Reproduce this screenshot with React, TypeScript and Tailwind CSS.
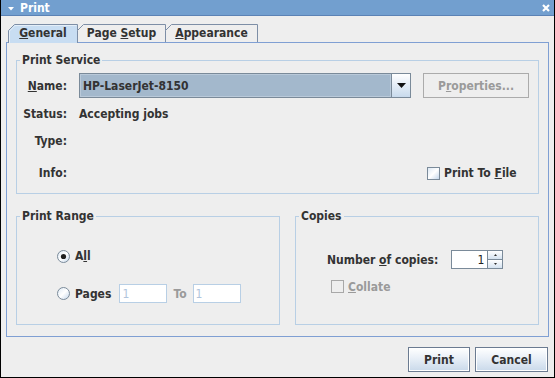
import React from "react";

function Tab({
  w,
  selected,
  className,
  children,
}: {
  w: number;
  selected?: boolean;
  className: string;
  children: React.ReactNode;
}) {
  const h = selected ? 19 : 18;
  return (
    <div className={`relative flex items-center justify-center ${className}`}>
      <svg
        className="absolute left-0 top-0"
        width={w}
        height={h}
        viewBox={`0 0 ${w} ${h}`}
      >
        <path
          d={`M0.5,${h} L0.5,6.5 L6.5,0.5 L${w - 0.5},0.5 L${w - 0.5},${h}`}
          fill={selected ? "#c8ddf2" : "#eeeeee"}
          stroke="#7d8ea6"
        />
        {selected && (
          <path
            d={`M1.5,${h} L1.5,7 L7,1.5 L${w - 1.5},1.5`}
            fill="none"
            stroke="#e4eef8"
          />
        )}
      </svg>
      <span className={`relative ${selected ? "pb-px" : ""}`}>{children}</span>
    </div>
  );
}

function Radio({ checked, id }: { checked?: boolean; id: string }) {
  return (
    <svg width="13" height="13" viewBox="0 0 13 13" className="shrink-0">
      <defs>
        <linearGradient id={id} x1="0" y1="0" x2="1" y2="1">
          <stop offset="0" stopColor="#dce8f4" />
          <stop offset="0.5" stopColor="#ffffff" />
          <stop offset="1" stopColor="#c0d4ea" />
        </linearGradient>
      </defs>
      <circle cx="6.5" cy="6.5" r="6" fill={`url(#${id})`} stroke="#7a8a99" />
      {checked && <circle cx="6.5" cy="6.5" r="2.6" fill="#1e1e1e" />}
    </svg>
  );
}

function Checkbox({ disabled }: { disabled?: boolean }) {
  return (
    <div
      className={
        disabled
          ? "w-[13px] h-[13px] border border-[#a8a8a8] bg-[#eeeeee] shrink-0"
          : "w-[13px] h-[13px] border border-[#7a8a99] bg-[linear-gradient(135deg,#dce8f4,#ffffff_50%,#c4d7ec)] shrink-0"
      }
    />
  );
}

function Button({ children }: { children: React.ReactNode }) {
  return (
    <div className="h-[25px] flex items-center justify-center border border-[#6b7b91] shadow-[inset_0_0_0_1px_#ffffff] bg-[linear-gradient(to_bottom,#ffffff,#e8eff7_45%,#c9d9ea)]">
      {children}
    </div>
  );
}

export default function App() {
  return (
    <div className="w-[555px] h-[378px] bg-[#eeeeee] border-x border-b border-black flex flex-col font-['DejaVu_Sans_Condensed','DejaVu_Sans',sans-serif] text-[12px] leading-[14px] font-bold text-[#333333] select-none overflow-hidden">
      {/* Title bar */}
      <div className="h-[16px] shrink-0 bg-[#729fcf] border-b border-[#5b82b5] flex items-center text-white">
        <svg width="6" height="4" viewBox="0 0 6 4" className="ml-[7px] mt-[2px]">
          <polygon points="0,0 6,0 3,3.5" fill="#ffffff" />
        </svg>
        <span className="ml-[6px]">Print</span>
        <div className="flex-1" />
        <svg width="8" height="8" viewBox="0 0 8 8" className="mr-[4px]">
          <path d="M1,1 L7,7 M7,1 L1,7" stroke="#ffffff" strokeWidth="2.2" />
        </svg>
      </div>

      {/* Body */}
      <div className="flex-1 flex flex-col px-[5px]">
        {/* Tabs */}
        <div className="mt-[8px] h-[18px] flex items-start pl-[2px] relative z-10">
          <Tab w={70} selected className="w-[70px] h-[19px]">
            <u>G</u>eneral
          </Tab>
          <Tab w={89} className="w-[89px] h-[18px] -ml-px">
            Page <u>S</u>etup
          </Tab>
          <Tab w={93} className="w-[93px] h-[18px] -ml-px">
            <u>A</u>ppearance
          </Tab>
        </div>

        {/* Tab panel */}
        <div className="h-[295px] border border-[#7f9fd3] flex flex-col px-[9px] pt-[10px]">
          {/* Print Service */}
          <fieldset className="h-[141px] border border-[#b8cfe5] px-0 m-0 min-w-0">
            <legend className="ml-[3px] px-[2px]">Print Service</legend>
            <div className="flex items-center h-[25px] mt-[6px]">
              <div className="w-[50px] text-right">
                <u>N</u>ame:
              </div>
              <div className="ml-[12px] w-[332px] h-[25px] flex border border-[#7a8a99]">
                <div className="flex-1 bg-[#a3b8cc] border border-[#b9c9d9] flex items-center pl-[2px]">
                  HP-LaserJet-8150
                </div>
                <div className="w-[19px] border-l border-[#7a8a99] bg-[linear-gradient(to_bottom,#ffffff,#e6eef7_45%,#c8daec)] flex items-center justify-center">
                  <svg width="9" height="5" viewBox="0 0 9 5">
                    <polygon points="0,0 9,0 4.5,5" fill="#111111" />
                  </svg>
                </div>
              </div>
              <div className="ml-[12px] w-[106px] h-[25px] border border-[#ababab] flex items-center justify-center text-[#9a9a9a]">
                P<u>r</u>operties...
              </div>
            </div>
            <div className="flex items-center h-[18px] mt-[7px]">
              <div className="w-[50px] text-right">Status:</div>
              <div className="ml-[12px]">Accepting jobs</div>
            </div>
            <div className="flex items-center h-[18px] mt-[9px]">
              <div className="w-[50px] text-right">Type:</div>
            </div>
            <div className="flex items-center h-[18px] mt-[14px]">
              <div className="w-[50px] text-right">Info:</div>
              <div className="ml-[12px] w-[332px]" />
              <div className="ml-[12px] pl-[4px] flex items-center">
                <Checkbox />
                <span className="ml-[4px]">
                  Print To <u>F</u>ile
                </span>
              </div>
            </div>
          </fieldset>

          {/* Lower row */}
          <div className="mt-[15px] flex gap-[15px]">
            <fieldset className="w-[264px] h-[116px] border border-[#b8cfe5] px-0 m-0 min-w-0">
              <legend className="ml-[3px] px-[2px]">Print Range</legend>
              <div className="pl-[40px] flex flex-col">
                <div className="mt-[24px] h-[18px] flex items-center">
                  <Radio checked id="rad-all" />
                  <span className="ml-[5px]">
                    A<u>l</u>l
                  </span>
                </div>
                <div className="mt-[19px] h-[19px] flex items-center">
                  <Radio id="rad-pages" />
                  <span className="ml-[5px]">
                    Pa<u>g</u>es
                  </span>
                  <div className="ml-[8px] w-[48px] h-[19px] border border-[#b8cfe5] bg-white flex items-center pl-[2px] font-normal text-[#b0c4dc]">
                    1
                  </div>
                  <span className="ml-[6px] text-[#9a9a9a]">To</span>
                  <div className="ml-[6px] w-[48px] h-[19px] border border-[#b8cfe5] bg-white flex items-center pl-[2px] font-normal text-[#b0c4dc]">
                    1
                  </div>
                </div>
              </div>
            </fieldset>

            <fieldset className="flex-1 h-[116px] border border-[#b8cfe5] px-0 m-0 min-w-0">
              <legend className="ml-[3px] px-[2px]">Copies</legend>
              <div className="pl-[31px] flex flex-col">
                <div className="mt-[27px] h-[19px] flex items-center">
                  <span>
                    Number <u>o</u>f copies:
                  </span>
                  <div className="ml-[13px] h-[19px] flex">
                    <div className="w-[37px] h-[19px] border border-[#7a8a99] bg-white flex items-center justify-end pr-[3px] font-normal text-[#222]">
                      1
                    </div>
                    <div className="w-[16px] h-[19px] flex flex-col -ml-px">
                      <div className="h-[10px] border border-[#7a8a99] bg-[linear-gradient(to_bottom,#ffffff,#d4e2f0)] flex items-center justify-center">
                        <svg width="3" height="2" viewBox="0 0 3 2">
                          <polygon points="1.5,0 3,2 0,2" fill="#333" />
                        </svg>
                      </div>
                      <div className="h-[10px] -mt-px border border-[#7a8a99] bg-[linear-gradient(to_bottom,#ffffff,#d4e2f0)] flex items-center justify-center">
                        <svg width="3" height="2" viewBox="0 0 3 2">
                          <polygon points="0,0 3,0 1.5,2" fill="#333" />
                        </svg>
                      </div>
                    </div>
                  </div>
                </div>
                <div className="mt-[11px] h-[13px] flex items-center pl-[4px]">
                  <Checkbox disabled />
                  <span className="ml-[4px] text-[#9a9a9a]">
                    <u>C</u>ollate
                  </span>
                </div>
              </div>
            </fieldset>
          </div>
        </div>

        {/* Buttons */}
        <div className="mt-[10px] flex justify-end gap-[5px] pr-[1px]">
          <div className="w-[62px]">
            <Button>Print</Button>
          </div>
          <div className="w-[73px]">
            <Button>Cancel</Button>
          </div>
        </div>
      </div>
    </div>
  );
}
